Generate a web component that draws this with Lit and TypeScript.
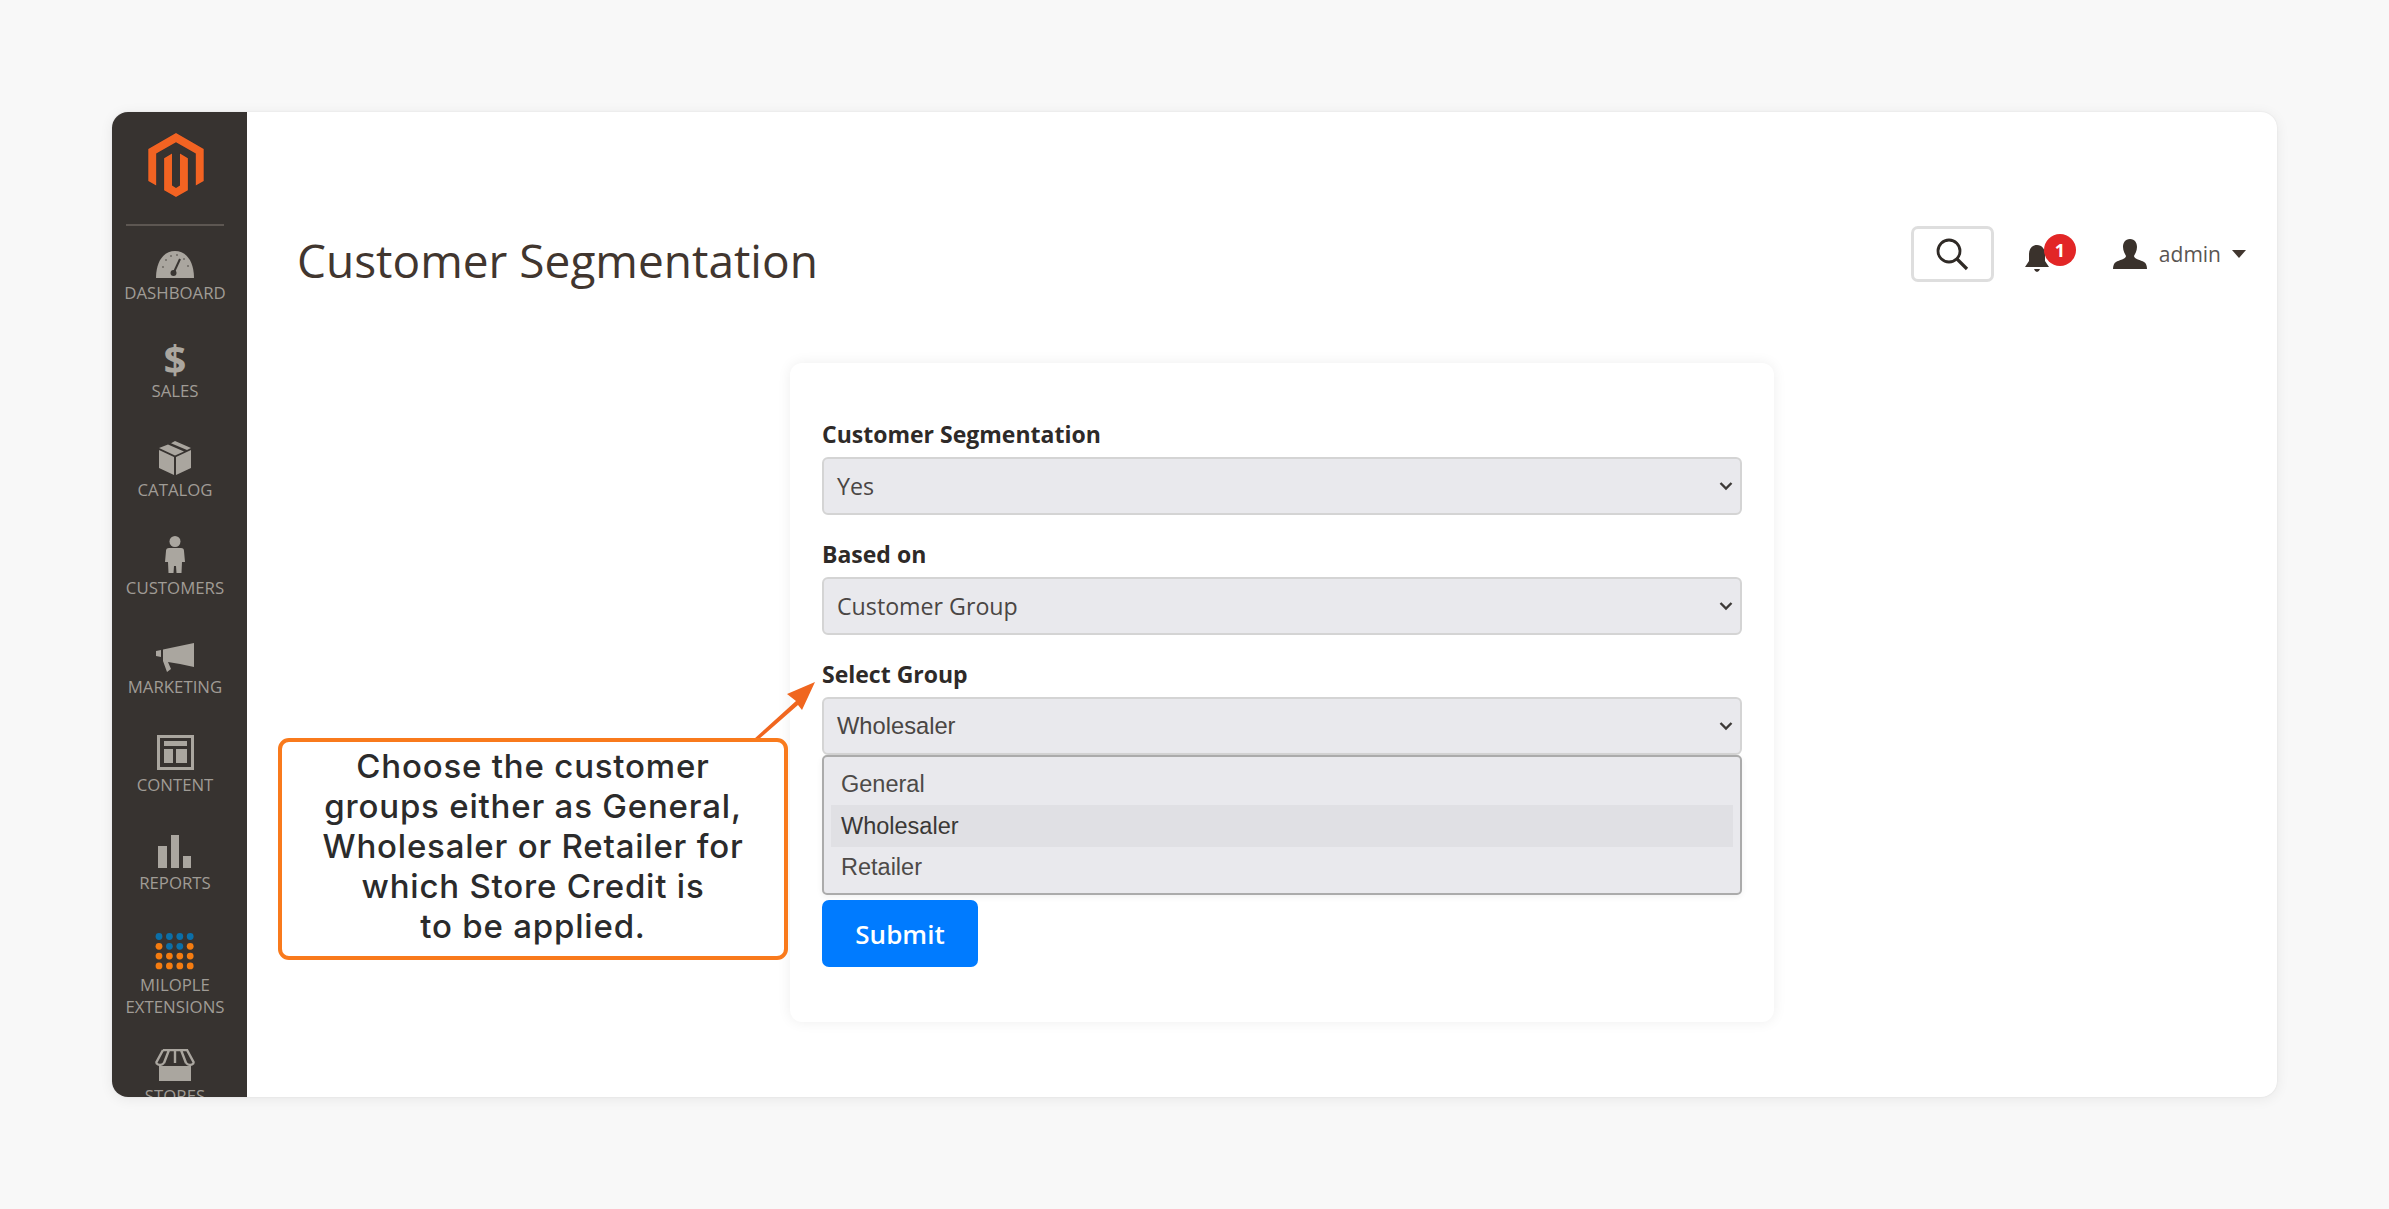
import { LitElement, html, css, svg } from "lit";
import { customElement } from "lit/decorators.js";

const icons: Record<string, any> = {
  dashboard: svg`<svg class="ic" width="38" height="27" viewBox="0 0 38 27"><path fill="#aaa69f" d="M0 27 C0 10 8 0 19 0 S38 10 38 27Z"/><g fill="#6d6963"><circle cx="7" cy="16" r="1"/><circle cx="10" cy="9" r="1"/><circle cx="15" cy="5" r="1"/><circle cx="21" cy="4" r="1"/><circle cx="28" cy="8" r="1"/><circle cx="32" cy="15" r="1"/></g><path stroke="#3a3633" stroke-width="2" fill="none" d="M24 8 L18 21"/><circle cx="17.500" cy="22" r="3" fill="#3a3633"/></svg>`,
  sales: html`<span class="dollar">$</span>`,
  catalog: svg`<svg class="ic" width="32" height="34" viewBox="0 0 32 34"><path fill="#aaa69f" d="M0 9 L15 16 V34 L0 27Z M32 9 L17 16 V34 L32 27Z"/><path fill="#aaa69f" d="M16 0 L32 7 L28 9 L12 2.300Z M9 3.500 L25 10.500 L16 14.500 L0 7Z"/></svg>`,
  customers: svg`<svg class="ic" width="20" height="37" viewBox="0 0 20 37"><circle cx="10" cy="5.500" r="5.500" fill="#aaa69f"/><path fill="#aaa69f" d="M4 12 H16 Q19 12 19 15 L20 26 H17 L16.500 37 H11.500 L11 30 H9 L8.500 37 H3.500 L3 26 H0 L1 15 Q1 12 4 12Z"/></svg>`,
  marketing: svg`<svg class="ic" width="38" height="29" viewBox="0 0 38 29"><path fill="#aaa69f" d="M0 8 L5 7 V14 L0 13Z M7 6.500 L38 0 V24 L24 21 L12 19 L15 26 L11 29 L7 18Z"/></svg>`,
  content: svg`<svg class="ic" width="37" height="35" viewBox="0 0 37 35"><path fill="#aaa69f" fill-rule="evenodd" d="M0 0H37V35H0Z M3 3V32H34V3Z"/><path fill="#aaa69f" d="M7 6H30V11H7Z M7 14H16V28H7Z M19 14H30V28H19Z"/></svg>`,
  reports: svg`<svg class="ic" width="34" height="33" viewBox="0 0 34 33"><path fill="#aaa69f" d="M0 11H9V33H0Z M13 0H21V33H13Z M25 21H33V33H25Z"/></svg>`,
  stores: svg`<svg class="ic" width="40" height="32" viewBox="0 0 40 32"><path fill="#aaa69f" d="M4 17H36V32H4Z"/><path fill="none" stroke="#aaa69f" stroke-width="2.400" d="M8 1H32L39 14 M8 1 L1 14 M14 1 L9 14 M20 1V14 M26 1 L31 14 M1 14 Q5 18 9 14 M31 14 Q35 18 39 14"/></svg>`,
  milople: svg`<svg class="ic" width="40" height="37" viewBox="0 0 40 37">${[0, 1, 2, 3].flatMap((r) =>
    [0, 1, 2, 3].map((c) => {
      const blue = r === 0 || (r === 1 && (c === 1 || c === 2));
      return svg`<circle cx=${4 + c * 10.4} cy=${3.5 + r * 9.8} r="3.400" fill=${blue ? "#0b6fa8" : "#f57c10"} />`;
    })
  )}</svg>`,
};

const nav = [
  { icon: "dashboard", label: ["DASHBOARD"] },
  { icon: "sales", label: ["SALES"] },
  { icon: "catalog", label: ["CATALOG"] },
  { icon: "customers", label: ["CUSTOMERS"] },
  { icon: "marketing", label: ["MARKETING"] },
  { icon: "content", label: ["CONTENT"] },
  { icon: "reports", label: ["REPORTS"] },
  { icon: "milople", label: ["MILOPLE", "EXTENSIONS"] },
  { icon: "stores", label: ["STORES"] },
];

const chevron = svg`<svg class="chev" width="14" height="10" viewBox="0 0 14 10"><path d="M1.500 2 L7 7.500 L12.500 2" fill="none" stroke="#3d3a38" stroke-width="2.400"/></svg>`;

@customElement("app-root")
export class AppRoot extends LitElement {
  static styles = css`
    :host {
      display: block;
      min-height: 100vh;
      background: #f8f8f8;
      box-sizing: border-box;
      padding: 112px 112px 0;
      font-family: "Open Sans", sans-serif;
      color: #41362f;
    }
    * { box-sizing: border-box; }
    .frame {
      position: relative;
      display: flex;
      height: 985px;
      background: #fff;
      border-radius: 16px;
      overflow: hidden;
      box-shadow: 0 2px 14px rgba(0, 0, 0, 0.07), 0 0 2px rgba(0, 0, 0, 0.08);
    }
    .side {
      flex: 0 0 135px;
      background: #373330;
      display: flex;
      flex-direction: column;
      align-items: center;
      overflow: hidden;
      padding-right: 9px;
    }
    .logo { margin-top: 21px; margin-left: 2px; display: block; flex: none; }
    .divider { width: 98px; height: 2px; background: #5d5752; margin-top: 27px; margin-bottom: 16px; flex: none; }
    .item {
      flex: none;
      width: 100%;
      height: 98.400px;
      display: flex;
      flex-direction: column;
      align-items: center;
    }
    .item.two { margin-top: 3px; height: 111px; }
    .iconbox { height: 36px; display: flex; align-items: flex-end; justify-content: center; margin-bottom: 4px; }
    .ic { display: block; }
    .dollar { font-weight: 700; font-size: 40px; line-height: 34px; color: #aaa69f; }
    .lbl { font-size: 16.800px; line-height: 22px; color: #a09c96; text-align: center; white-space: nowrap; }
    .main { flex: 1; display: flex; flex-direction: column; min-width: 0; }
    .head {
      display: flex;
      justify-content: space-between;
      align-items: flex-start;
      height: 170px;
      padding: 114px 31px 0 50px;
    }
    h1 { margin: 3px 0 0; font-size: 46px; font-weight: 400; line-height: 62px; color: #41362f; white-space: nowrap; }
    .tools { display: flex; align-items: center; height: 56px; }
    .search {
      width: 83px; height: 56px;
      border: 3px solid #dedede; border-radius: 7px;
      display: flex; align-items: center; justify-content: center;
    }
    .bell { position: relative; width: 53px; height: 40px; margin-left: 30px; }
    .bell svg { position: absolute; left: 1px; top: 11px; }
    .badge {
      position: absolute; left: 20px; top: 0;
      width: 32px; height: 32px; border-radius: 50%;
      background: #e22626; color: #fff;
      font: 700 18px/32px "Open Sans", sans-serif; text-align: center;
    }
    .user { display: flex; align-items: center; margin-left: 36px; }
    .name { margin-left: 12px; font-size: 21px; color: #5a5552; }
    .caret { margin-left: 11px; width: 0; height: 0; border-left: 7px solid transparent; border-right: 7px solid transparent; border-top: 8px solid #41362f; }
    .card {
      margin: 81px 0 0 543px;
      width: 984px;
      background: #fff;
      border-radius: 12px;
      padding: 56px 32px 55px;
      box-shadow: 0 0 14px rgba(0, 0, 0, 0.07);
    }
    label { display: block; font-weight: 700; font-size: 23px; line-height: 30px; color: #2e2a28; margin-bottom: 8px; }
    .select {
      height: 58px;
      background: #e9e9ed;
      border: 2.500px solid #d4d4d4;
      border-radius: 6px;
      display: flex; align-items: center; justify-content: space-between;
      padding: 0 7px 0 13px;
      font-size: 23.200px;
      color: #4a4644;
      margin-bottom: 24px;
    }
    .select.arial { font-family: "Liberation Sans", sans-serif; font-size: 23.700px; margin-bottom: 0; }
    .list {
      height: 140px;
      background: #e9e9ed;
      border: 2.500px solid #ababab;
      border-radius: 5px;
      padding: 15.500px 7px 0;
      font: 23.500px/42px "Liberation Sans", sans-serif;
      color: #4d4a48;
      box-shadow: 0 2px 6px rgba(0, 0, 0, 0.06);
    }
    .opt { height: 42px; padding-left: 10px; margin-top: -1px; }
    .opt:first-child { margin-top: -10px; height: 42px; }
    .opt.sel { background: #e0e0e4; color: #3a3836; margin-top: 0; }
    button {
      display: block;
      margin-top: 5px;
      width: 156px; height: 67px;
      border: 0; border-radius: 7px;
      background: #007bff; color: #fff;
      font: 600 26px "Open Sans", sans-serif;
    }
    .callout {
      position: absolute; left: 166px; top: 626px;
      width: 510px; height: 222px;
      background: #fff;
      border: 4px solid #f97a1c;
      border-radius: 11px;
      padding-top: 3.500px;
      font: 500 33px/40px Inter, sans-serif;
      letter-spacing: 0.800px;
      color: #2b2b2b;
      text-align: center;
    }
    .arrow { position: absolute; left: 638px; top: 568px; }
  `;

  render() {
    return html`
      <div class="frame">
        <aside class="side">
          <svg class="logo" width="64" height="64" viewBox="0 0 24 24">
            <path fill="#f26322" stroke="#2c2e33" stroke-width="0.300" paint-order="stroke" d="M12 24l-4.455-2.572v-12l2.97-1.715v12.001l1.485.902 1.485-.902V7.713l2.971 1.715v12L12 24zM22.391 6v12l-2.969 1.714V7.713L12 3.43 4.574 7.713v12.001L1.609 18V6L12 0l10.391 6z"/>
          </svg>
          <div class="divider"></div>
          ${nav.map(
            (n) => html`<div class="item ${n.label.length > 1 ? "two" : ""}">
              <div class="iconbox">${icons[n.icon]}</div>
              ${n.label.map((l) => html`<div class="lbl">${l}</div>`)}
            </div>`
          )}
        </aside>
        <main class="main">
          <header class="head">
            <h1>Customer Segmentation</h1>
            <div class="tools">
              <div class="search">
                <svg width="36" height="36" viewBox="0 0 36 36"><circle cx="15" cy="15" r="11" fill="none" stroke="#2f2a26" stroke-width="2.800"/><path d="M23 23 L33 33" stroke="#2f2a26" stroke-width="3.200"/></svg>
              </div>
              <div class="bell">
                <svg width="24" height="27" viewBox="0 0 24 27"><path fill="#3a322c" d="M12 0 C17 0 20 4 20 9 V16 L24 22 H0 L4 16 V9 C4 4 7 0 12 0Z M9 24 H15 Q14 27 12 27 T9 24Z"/></svg>
                <div class="badge">1</div>
              </div>
              <div class="user">
                <svg width="34" height="30" viewBox="0 0 34 30"><path fill="#3a322c" d="M17 0 C22 0 24 4 24 8 C24 12 22 15 21 17 C21 20 28 21 31 23 C33 24 34 27 34 30 H0 C0 27 1 24 3 23 C6 21 13 20 13 17 C12 15 10 12 10 8 C10 4 12 0 17 0Z"/></svg>
                <span class="name">admin</span>
                <span class="caret"></span>
              </div>
            </div>
          </header>
          <section class="card">
            <label>Customer Segmentation</label>
            <div class="select"><span>Yes</span>${chevron}</div>
            <label>Based on</label>
            <div class="select"><span>Customer Group</span>${chevron}</div>
            <label>Select Group</label>
            <div class="select arial"><span>Wholesaler</span>${chevron}</div>
            <div class="list">
              <div class="opt">General</div>
              <div class="opt sel">Wholesaler</div>
              <div class="opt">Retailer</div>
            </div>
            <button>Submit</button>
          </section>
        </main>
        <svg class="arrow" width="72" height="76" viewBox="0 0 72 76"><path fill="#f0661f" d="M65 2 L37 14 L46 21 L4 59 L9 59 L48 25 L52 30Z"/></svg>
        <div class="callout">Choose the customer<br />groups either as General,<br />Wholesaler or Retailer for<br />which Store Credit is<br />to be applied.</div>
      </div>
    `;
  }
}
